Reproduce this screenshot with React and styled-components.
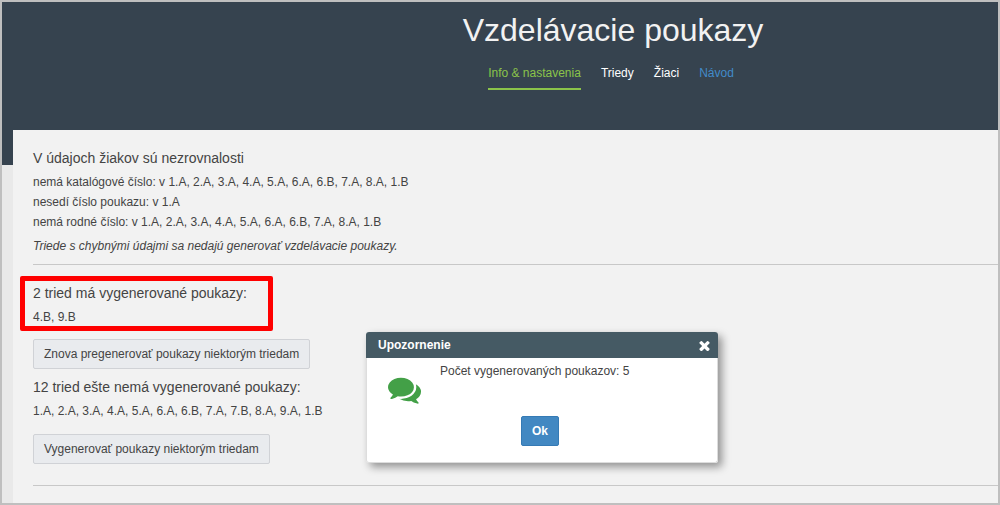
import React from 'react'
import styled, { createGlobalStyle } from 'styled-components'

const GlobalStyle = createGlobalStyle`
  * {
    box-sizing: border-box;
  }
  body {
    margin: 0;
    font-family: "Liberation Sans", Arial, sans-serif;
    font-size: 12px;
    line-height: 20px;
    color: #444;
  }
`

const Page = styled.div`
  position: relative;
  min-height: 100vh;
  display: flex;
  flex-direction: column;
  border: 2px solid #bfbfbf;
  background: #e9e9e9;
`
const Hero = styled.header`
  display: flex;
  flex-direction: column;
  align-items: center;
  padding: 8px 0 75px 226px;
  background: #36434f;
`
const Title = styled.h1`
  margin: 0;
  font-size: 32px;
  line-height: 40px;
  font-weight: normal;
  color: #f2f2f2;
`
const Nav = styled.nav`
  display: flex;
  gap: 20px;
  margin-top: 10px;
  padding-right: 4px;
`
const NavLink = styled.a`
  padding: 3px 0 5px;
  border-bottom: 2px solid ${props => (props.$active ? '#8bc34a' : 'transparent')};
  color: ${props => props.$color || '#fff'};
  text-decoration: none;
`

// the sheet overlaps the lower part of the hero
const Sheet = styled.main`
  flex: 1;
  margin: -35px 0 0 11px;
  padding: 18px 0 16px 20px;
  background: #f2f2f2;
`
const Section = styled.section`
  position: relative;
`
const Heading = styled.h2`
  margin: 0 0 4px;
  font-size: 14px;
  line-height: 20px;
  font-weight: normal;
`
const Line = styled.p`
  margin: 0;
`
const Note = styled.p`
  margin: 4px 0 0;
  font-style: italic;
`
const Divider = styled.hr`
  height: 1px;
  margin: ${props => props.$top}px 0 18px;
  border: none;
  background: #c8c8c8;
  &:last-child {
    margin-bottom: 0;
  }
`
const Highlight = styled.div`
  position: absolute;
  top: -7px;
  left: -13px;
  width: 253px;
  height: 55px;
  border: 5px solid #f00;
  border-radius: 2px;
  pointer-events: none;
`
const Button = styled.button`
  display: block;
  height: 30px;
  margin: ${props => props.$top}px 0 8px;
  padding: 0 10px;
  border: 1px solid #d0d2d6;
  border-radius: 2px;
  background: #e9ebee;
  color: #444;
  font: inherit;
  cursor: pointer;
`

const Dialog = styled.div`
  position: absolute;
  top: 330px;
  left: 364px;
  width: 352px;
  border-radius: 3px;
  background: #fff;
  box-shadow: 4px 4px 8px rgba(0, 0, 0, .4);
`
const DialogHead = styled.div`
  display: flex;
  align-items: center;
  justify-content: space-between;
  height: 26px;
  padding: 0 8px 0 12px;
  border-radius: 3px 3px 0 0;
  background: #455a64;
  color: #fff;
`
const DialogTitle = styled.strong`
  font-size: 12px;
`
const CloseBtn = styled.button`
  display: flex;
  padding: 0;
  border: none;
  background: none;
  color: #fff;
  cursor: pointer;
`
const DialogContent = styled.div`
  border: 1px solid #ddd;
  border-top: none;
  border-radius: 0 0 3px 3px;
`
const DialogBody = styled.div`
  display: flex;
  gap: 19px;
  height: 58px;
  padding: 3px 21px 0;
`
const IconBox = styled.div`
  display: flex;
  padding-top: 12px;
  color: #43a047;
`
const DialogFoot = styled.div`
  display: flex;
  justify-content: center;
  padding-bottom: 16px;
`
const OkBtn = styled.button`
  height: 30px;
  padding: 0 10px;
  margin-right: 4px;
  border: 1px solid #357ab5;
  border-radius: 2px;
  background: #4288c2;
  color: #fff;
  font: inherit;
  font-weight: bold;
  cursor: pointer;
`

const CommentsIcon = () => (
  <svg width="33" height="33" viewBox="0 0 1792 1792" fill="currentColor" aria-hidden="true">
    <path d="M1408 768q0 139-94 257t-256.500 186.500-353.500 68.500q-86 0-176-16-124 88-278 128-36 9-86 16h-3q-11 0-20.500-8t-11.500-21q-1-3-1-6.500t.5-6.500 2-6l2.500-5 3.500-5.500 4-5 4.500-5 4-4.500q5-6 23-25t26-29.500 22.500-29 25-38.500 20.500-44q-124-72-195-177t-71-224q0-139 94-257t256.500-186.500 353.500-68.500 353.500 68.500 256.500 186.500 94 257zm384 256q0 120-71 224.500t-195 176.500q10 24 20.500 44t25 38.500 22.500 29 26 29.500 23 25q1 1 4 4.500t4.500 5 4 5 3.500 5.500l2.500 5 2 6 .5 6.500-1 6.500q-3 14-13 22t-22 7q-50-7-86-16-154-40-278-128-90 16-176 16-271 0-472-132 58 4 88 4 161 0 309-45t264-129q125-92 192-212t67-254q0-77-23-152 129 71 204 178t75 230z" />
  </svg>
)

const TimesIcon = () => (
  <svg width="11" height="11" viewBox="256 256 1280 1280" fill="currentColor" aria-hidden="true">
    <path d="M1490 1322q0 40-28 68l-136 136q-28 28-68 28t-68-28l-294-294-294 294q-28 28-68 28t-68-28l-136-136q-28-28-28-68t28-68l294-294-294-294q-28-28-28-68t28-68l136-136q28-28 68-28t68 28l294 294 294-294q28-28 68-28t68 28l136 136q28 28 28 68t-28 68l-294 294 294 294q28 28 28 68z" />
  </svg>
)

export default function App() {
  return (
    <Page>
      <GlobalStyle />
      <Hero>
        <Title>Vzdelávacie poukazy</Title>
        <Nav>
          <NavLink href="#info" $active $color="#8bc34a">Info &amp; nastavenia</NavLink>
          <NavLink href="#triedy">Triedy</NavLink>
          <NavLink href="#ziaci">Žiaci</NavLink>
          <NavLink href="#navod" $color="#428bca">Návod</NavLink>
        </Nav>
      </Hero>

      <Sheet>
        <Section>
          <Heading>V údajoch žiakov sú nezrovnalosti</Heading>
          <Line>nemá katalógové číslo: v 1.A, 2.A, 3.A, 4.A, 5.A, 6.A, 6.B, 7.A, 8.A, 1.B</Line>
          <Line>nesedí číslo poukazu: v 1.A</Line>
          <Line>nemá rodné číslo: v 1.A, 2.A, 3.A, 4.A, 5.A, 6.A, 6.B, 7.A, 8.A, 1.B</Line>
          <Note>Triede s chybnými údajmi sa nedajú generovať vzdelávacie poukazy.</Note>
        </Section>
        <Divider $top={8} />
        <Section>
          <Heading>2 tried má vygenerované poukazy:</Heading>
          <Line>4.B, 9.B</Line>
          <Highlight />
          <Button type="button" $top={12}>Znova pregenerovať poukazy niektorým triedam</Button>
        </Section>
        <Section>
          <Heading>12 tried ešte nemá vygenerované poukazy:</Heading>
          <Line>1.A, 2.A, 3.A, 4.A, 5.A, 6.A, 6.B, 7.A, 7.B, 8.A, 9.A, 1.B</Line>
          <Button type="button" $top={13}>Vygenerovať poukazy niektorým triedam</Button>
        </Section>
        <Divider $top={21} />
      </Sheet>

      <Dialog role="dialog" aria-labelledby="dialog-title">
        <DialogHead>
          <DialogTitle id="dialog-title">Upozornenie</DialogTitle>
          <CloseBtn type="button" aria-label="Zavrieť"><TimesIcon /></CloseBtn>
        </DialogHead>
        <DialogContent>
          <DialogBody>
            <IconBox><CommentsIcon /></IconBox>
            <Line>Počet vygenerovaných poukazov: 5</Line>
          </DialogBody>
          <DialogFoot>
            <OkBtn type="button">Ok</OkBtn>
          </DialogFoot>
        </DialogContent>
      </Dialog>
    </Page>
  )
}
